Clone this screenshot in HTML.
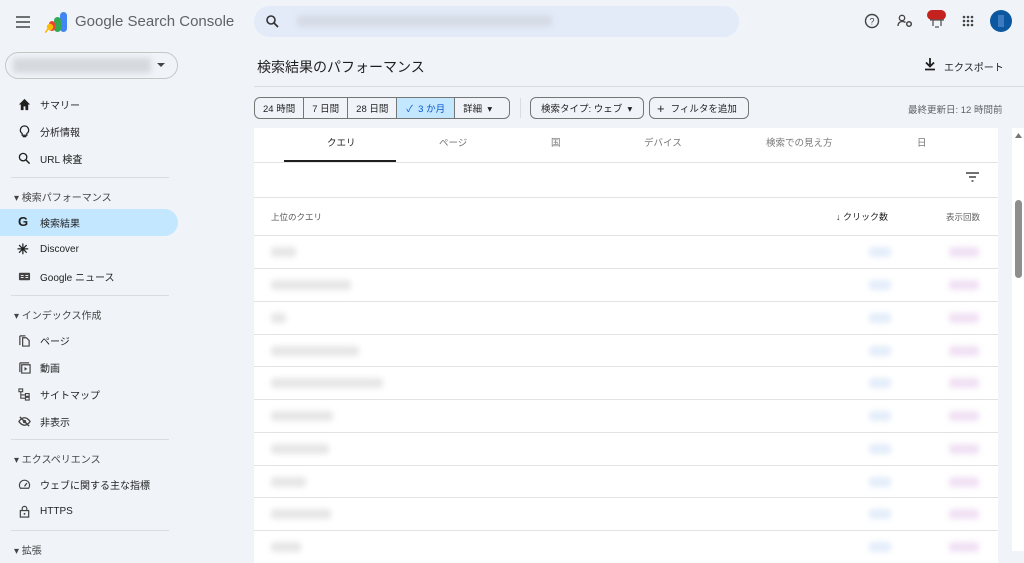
<!DOCTYPE html><html><head><meta charset="utf-8"><style>
*{box-sizing:border-box;margin:0;padding:0}
body{width:1024px;height:551px;overflow:hidden;background:#f0f4f9;font-family:"Liberation Sans","Noto Sans CJK JP",sans-serif;color:#1f1f1f;position:relative;font-size:10px}
.a{position:absolute}
.nav{position:absolute;left:0;width:178px;height:27px;display:flex;align-items:center;padding-left:40px;font-size:10px;color:#1f1f1f}
.nav .ic{position:absolute;left:18px;top:7px;width:13px;height:13px}
.sec{position:absolute;left:14px;font-size:10px;color:#444}
.hr{position:absolute;left:11px;width:158px;height:1px;background:#dadce0}
.chip{position:absolute;top:97px;height:22px;border:1px solid #747775;border-radius:6px;display:flex;align-items:center;font-size:9.5px;color:#1f1f1f}
.seg{height:100%;display:flex;align-items:center;padding:0 8px;border-right:1px solid #747775}
.row{position:absolute;left:254px;width:744px;height:33px;border-top:1px solid #e3e3e3;background:#fff}
.b{position:absolute;top:11px;height:10px;border-radius:3px;filter:blur(3px)}
.q{background:#e6e6e6}
.c{background:#e3edfa}
.p{background:#f0e0f3}
</style></head><body>
<svg class="a" style="left:16px;top:16px" width="14" height="12"><path d="M0 1h14M0 6h14M0 11h14" stroke="#444" stroke-width="1.6"/></svg>
<svg class="a" style="left:45px;top:11px" width="24" height="22"><rect x="15" y="1" width="7" height="20" rx="3.5" fill="#4285f4"/><rect x="9" y="6" width="7" height="15" rx="3.5" fill="#34a853"/><rect x="4" y="10" width="6" height="10" rx="3" fill="#ea4335"/><circle cx="5" cy="16" r="3.2" fill="#fbbc04"/><path d="M3 18l-3 4" stroke="#fbbc04" stroke-width="1.6"/></svg>
<div class="a" style="left:75px;top:13px;font-size:15px;color:#5f6368">Google Search Console</div>
<div class="a" style="left:254px;top:6px;width:485px;height:31px;border-radius:16px;background:#e3ebf9"></div>
<svg class="a" style="left:266px;top:15px" width="13" height="13"><circle cx="5" cy="5" r="4" stroke="#333" stroke-width="1.6" fill="none"/><path d="M8 8l4 4" stroke="#333" stroke-width="1.8"/></svg>
<div class="a" style="left:297px;top:15px;width:255px;height:12px;background:#d5dbe6;filter:blur(3px);border-radius:4px"></div>
<svg class="a" style="left:864px;top:13px" width="16" height="16"><circle cx="8" cy="8" r="6.5" stroke="#444" stroke-width="1.4" fill="none"/><text x="8" y="11.5" font-size="9" text-anchor="middle" fill="#444" font-family="Liberation Sans">?</text></svg>
<svg class="a" style="left:897px;top:14px" width="16" height="14"><circle cx="5" cy="4" r="2.7" stroke="#444" stroke-width="1.3" fill="none"/><path d="M1 12c0-3 2-4.5 4-4.5s3 .5 3.5 1" stroke="#444" stroke-width="1.3" fill="none"/><circle cx="12" cy="10" r="2.3" stroke="#444" stroke-width="1.5" fill="none"/></svg>
<div class="a" style="left:927px;top:10px;width:19px;height:10px;border-radius:5px;background:#c5221f"></div>
<svg class="a" style="left:929px;top:19px" width="16" height="9"><path d="M1 1h14M4 1v6M12 1v6M6 8h4" stroke="#555" stroke-width="1.3"/></svg>
<svg class="a" style="left:962px;top:15px" width="12" height="12" fill="#444"><circle cx="2" cy="2" r="1.3"/><circle cx="6" cy="2" r="1.3"/><circle cx="10" cy="2" r="1.3"/><circle cx="2" cy="6" r="1.3"/><circle cx="6" cy="6" r="1.3"/><circle cx="10" cy="6" r="1.3"/><circle cx="2" cy="10" r="1.3"/><circle cx="6" cy="10" r="1.3"/><circle cx="10" cy="10" r="1.3"/></svg>
<div class="a" style="left:990px;top:10px;width:22px;height:22px;border-radius:50%;background:#0b57a0"></div>
<div class="a" style="left:998px;top:15px;width:6px;height:12px;background:#3d7ac0"></div>
<div class="a" style="left:5px;top:52px;width:173px;height:27px;border:1px solid #c4c7c5;border-radius:14px"></div>
<div class="a" style="left:13px;top:58px;width:138px;height:15px;background:#d5d8dc;filter:blur(3px)"></div>
<svg class="a" style="left:157px;top:63px" width="8" height="5"><path d="M0 0h8L4 4z" fill="#444"/></svg>
<div class="nav" style="top:91px"><svg class="ic" viewBox="0 0 14 14"><path d="M7 1L1 7h2v6h3V9h2v4h3V7h2z" fill="#1f1f1f"/></svg>サマリー</div>
<div class="nav" style="top:118px"><svg class="ic" viewBox="0 0 14 14"><path d="M7 1a4.5 4.5 0 0 0-2.5 8.2V11h5V9.2A4.5 4.5 0 0 0 7 1zM5 12.5h4" stroke="#1f1f1f" stroke-width="1.3" fill="none"/></svg>分析情報</div>
<div class="nav" style="top:145px"><svg class="ic" viewBox="0 0 14 14"><circle cx="5.5" cy="5.5" r="4" stroke="#1f1f1f" stroke-width="1.4" fill="none"/><path d="M8.5 8.5l4 4" stroke="#1f1f1f" stroke-width="1.6"/></svg>URL 検査</div>
<div class="hr" style="top:177px"></div>
<div class="sec" style="top:189px">▾ 検索パフォーマンス</div>
<div class="a" style="left:0;top:209px;width:178px;height:27px;background:#c2e7ff;border-radius:0 14px 14px 0"></div>
<div class="nav" style="top:209px"><span class="a" style="left:18px;top:5px;font-weight:bold;font-size:13px">G</span>検索結果</div>
<div class="nav" style="top:236px"><span class="a" style="left:17px;top:5px;font-size:14px;font-weight:bold">✳</span>Discover</div>
<div class="nav" style="top:263px"><svg class="ic" viewBox="0 0 14 14"><rect x="1" y="3" width="12" height="8" rx="1" fill="#444"/><path d="M3 6h3M3 8h3M8 6h3M8 8h3" stroke="#fff"/></svg>Google ニュース</div>
<div class="hr" style="top:295px"></div>
<div class="sec" style="top:307px">▾ インデックス作成</div>
<div class="nav" style="top:327px"><svg class="ic" viewBox="0 0 14 14"><path d="M2 2v10M2 2h6M5 4h4l3 3v6H5z" stroke="#444" stroke-width="1.3" fill="none"/></svg>ページ</div>
<div class="nav" style="top:354px"><svg class="ic" viewBox="0 0 14 14"><path d="M2 2v10M2 2h10M4 4h9v9H4z" stroke="#444" stroke-width="1.3" fill="none"/><path d="M7 6.5v4l3-2z" fill="#444"/></svg>動画</div>
<div class="nav" style="top:381px"><svg class="ic" viewBox="0 0 14 14"><path d="M1 1h4v3H1zM8 6h4v3H8zM8 10h4v3H8zM3 4v7h5M3 7.5h5" stroke="#444" stroke-width="1.2" fill="none"/></svg>サイトマップ</div>
<div class="nav" style="top:408px"><svg class="ic" viewBox="0 0 14 14"><path d="M1 7s2.5-4 6-4 6 4 6 4-2.5 4-6 4-6-4-6-4z" stroke="#444" stroke-width="1.4" fill="none"/><circle cx="7" cy="7" r="1.8" fill="#444"/><path d="M2 2l10 10" stroke="#444" stroke-width="1.5"/></svg>非表示</div>
<div class="hr" style="top:439px"></div>
<div class="sec" style="top:451px">▾ エクスペリエンス</div>
<div class="nav" style="top:471px"><svg class="ic" viewBox="0 0 14 14"><path d="M2.5 11a5.5 5.5 0 1 1 9 0z" stroke="#444" stroke-width="1.3" fill="none"/><path d="M7 9l2.5-3.5" stroke="#444" stroke-width="1.4"/></svg>ウェブに関する主な指標</div>
<div class="nav" style="top:498px"><svg class="ic" viewBox="0 0 14 14"><rect x="2.5" y="6" width="9" height="7" stroke="#444" stroke-width="1.3" fill="none"/><path d="M4.5 6V4a2.5 2.5 0 0 1 5 0v2" stroke="#444" stroke-width="1.3" fill="none"/><circle cx="7" cy="9.5" r="1" fill="#444"/></svg>HTTPS</div>
<div class="hr" style="top:530px"></div>
<div class="sec" style="top:542px">▾ 拡張</div>
<div class="a" style="left:257px;top:57px;font-size:14px;color:#1f1f1f">検索結果のパフォーマンス</div>
<svg class="a" style="left:924px;top:57px" width="12" height="14"><path d="M6 1v8M2 5.5l4 4 4-4M1 12.5h10" stroke="#1f1f1f" stroke-width="1.8" fill="none"/></svg>
<div class="a" style="left:944px;top:59px;font-size:10px">エクスポート</div>
<div class="a" style="left:254px;top:86px;width:770px;height:1px;background:#dadce0"></div>
<div class="chip" style="left:254px;width:256px"><div class="seg">24 時間</div><div class="seg">7 日間</div><div class="seg">28 日間</div><div class="seg" style="background:#c2e7ff;color:#0b57d0;padding:0 9px">✓&nbsp; 3 か月</div><div class="seg" style="border:none">詳細 &nbsp;▾</div></div>
<div class="a" style="left:520px;top:98px;width:1px;height:20px;background:#dadce0"></div>
<div class="chip" style="left:530px;width:114px;padding-left:10px">検索タイプ: ウェブ &nbsp;▾</div>
<div class="chip" style="left:649px;width:100px;padding-left:7px"><span style="font-size:13px;margin-right:6px">+</span>フィルタを追加</div>
<div class="a" style="left:908px;top:102px;font-size:9.5px;color:#5f6368">最終更新日: 12 時間前</div>
<div class="a" style="left:254px;top:128px;width:744px;height:430px;background:#fff"></div>
<div class="a" style="left:254px;top:135px;font-size:9.5px;color:#444;width:744px">
<span class="a" style="left:73px;color:#1f1f1f">クエリ</span><span class="a" style="left:185px;color:#777">ページ</span><span class="a" style="left:297px;color:#777">国</span><span class="a" style="left:390px;color:#777">デバイス</span><span class="a" style="left:512px;color:#777">検索での見え方</span><span class="a" style="left:663px;color:#777">日</span></div>
<div class="a" style="left:284px;top:160px;width:112px;height:2px;background:#1f1f1f"></div>
<div class="a" style="left:254px;top:162px;width:744px;height:1px;background:#e3e3e3"></div>
<svg class="a" style="left:966px;top:172px" width="13" height="10"><path d="M0 1h13M3 5h7M5.5 9h2" stroke="#444" stroke-width="1.4"/></svg>
<div class="a" style="left:254px;top:197px;width:744px;height:1px;background:#e3e3e3"></div>
<div class="a" style="left:271px;top:211px;font-size:8.5px;color:#555">上位のクエリ</div>
<div class="a" style="left:836px;top:210px;font-size:9px;color:#1f1f1f">↓ クリック数</div>
<div class="a" style="left:946px;top:211px;font-size:8.5px;color:#666">表示回数</div>
<div class="row" style="top:235px"><div class="b q" style="left:17px;width:25px"></div><div class="b c" style="left:615px;width:22px"></div><div class="b p" style="left:695px;width:30px"></div></div>
<div class="row" style="top:268px"><div class="b q" style="left:17px;width:80px"></div><div class="b c" style="left:615px;width:22px"></div><div class="b p" style="left:695px;width:30px"></div></div>
<div class="row" style="top:301px"><div class="b q" style="left:17px;width:15px"></div><div class="b c" style="left:615px;width:22px"></div><div class="b p" style="left:695px;width:30px"></div></div>
<div class="row" style="top:334px"><div class="b q" style="left:17px;width:88px"></div><div class="b c" style="left:615px;width:22px"></div><div class="b p" style="left:695px;width:30px"></div></div>
<div class="row" style="top:366px"><div class="b q" style="left:17px;width:112px"></div><div class="b c" style="left:615px;width:22px"></div><div class="b p" style="left:695px;width:30px"></div></div>
<div class="row" style="top:399px"><div class="b q" style="left:17px;width:62px"></div><div class="b c" style="left:615px;width:22px"></div><div class="b p" style="left:695px;width:30px"></div></div>
<div class="row" style="top:432px"><div class="b q" style="left:17px;width:58px"></div><div class="b c" style="left:615px;width:22px"></div><div class="b p" style="left:695px;width:30px"></div></div>
<div class="row" style="top:465px"><div class="b q" style="left:17px;width:35px"></div><div class="b c" style="left:615px;width:22px"></div><div class="b p" style="left:695px;width:30px"></div></div>
<div class="row" style="top:497px"><div class="b q" style="left:17px;width:60px"></div><div class="b c" style="left:615px;width:22px"></div><div class="b p" style="left:695px;width:30px"></div></div>
<div class="row" style="top:530px"><div class="b q" style="left:17px;width:30px"></div><div class="b c" style="left:615px;width:22px"></div><div class="b p" style="left:695px;width:30px"></div></div>
<div class="a" style="left:1012px;top:128px;width:12px;height:423px;background:#fff"></div>
<svg class="a" style="left:1015px;top:133px" width="7" height="5"><path d="M0 5h7L3.5 0z" fill="#777"/></svg>
<div class="a" style="left:1015px;top:200px;width:7px;height:78px;border-radius:4px;background:#8e8e8e"></div>
</body></html>
